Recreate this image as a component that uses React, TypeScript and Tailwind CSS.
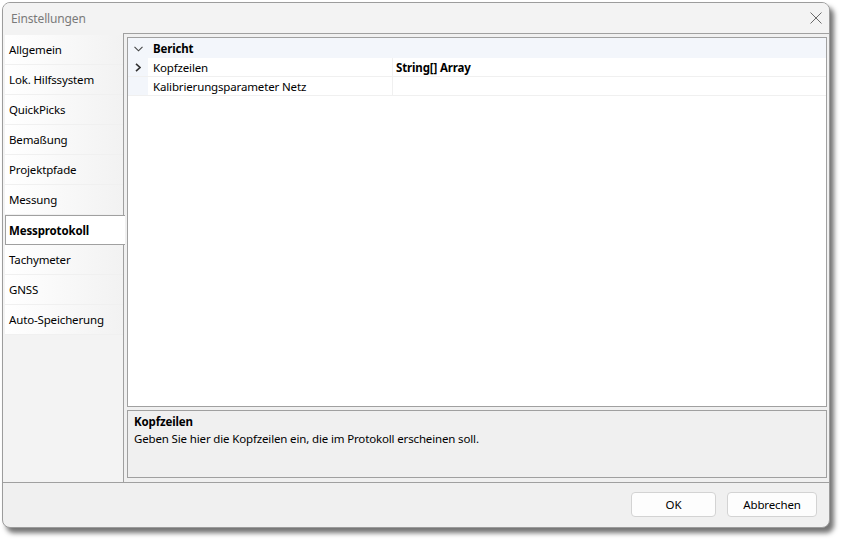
import { useState } from 'react';

const TABS = [
  'Allgemein',
  'Lok. Hilfssystem',
  'QuickPicks',
  'Bemaßung',
  'Projektpfade',
  'Messung',
  'Messprotokoll',
  'Tachymeter',
  'GNSS',
  'Auto-Speicherung',
];

const FONT = { fontFamily: '"Noto Sans", "Open Sans", sans-serif' };

export default function App() {
  const [active, setActive] = useState('Messprotokoll');

  return (
    <div
      className="w-[845px] h-[544px] bg-white pt-[2px] pl-[2px] text-[11.5px] tracking-[-0.15px] text-black"
      style={FONT}
    >
      <div className="w-[828px] h-[526px] flex flex-col border border-[#9c9c9c] rounded-[8px] bg-[#f0f0f0] shadow-[4px_5px_5px_rgba(0,0,0,0.55)] overflow-hidden">
        {/* Title bar */}
        <div className="h-[30px] shrink-0 flex items-center justify-between bg-[#f3f3f3] pl-[8px] pr-[7px] pt-[2px]">
          <span className="text-[#7a7a7a] leading-none text-[12px]">Einstellungen</span>
          <svg width="12" height="12" viewBox="0 0 12 12" className="mt-[-3px]">
            <path d="M0.5 0.5 L11.5 11.5 M11.5 0.5 L0.5 11.5" stroke="#6a6a6a" strokeWidth="1" fill="none" />
          </svg>
        </div>

        {/* Body */}
        <div className="flex h-[450px] shrink-0 border-b border-[#a0a0a0]">
          {/* Tab list */}
          <div className="w-[120px] shrink-0 flex flex-col pt-[2px] pl-[2px] bg-[#f3f3f3]">
            {TABS.map(t =>
              t === active ? (
                <div
                  key={t}
                  className="h-[30px] w-[120px] z-10 flex items-center pl-[3px] pt-[1px] bg-white border border-r-0 border-[#a0a0a0] font-bold"
                >
                  {t}
                </div>
              ) : (
                <div
                  key={t}
                  onClick={() => setActive(t)}
                  className="h-[30px] w-[118px] flex items-center pl-[4px] pt-[1px] mr-[1px] border-b border-[#f0f0f0] bg-gradient-to-r from-white to-[#f2f2f2] cursor-default"
                >
                  {t}
                </div>
              )
            )}
          </div>

          {/* Tab page */}
          <div className="flex-1 flex flex-col border-l border-t border-[#a0a0a0] bg-[#f0f0f0] pt-[3px] pl-[3px] pr-[2px] pb-[4px] gap-[3px]">
            {/* Property grid */}
            <div className="h-[370px] bg-white border border-[#a0a0a0] flex flex-col">
              <div className="h-[20px] flex items-center bg-[#f3f6fb] pt-[1px]">
                <div className="w-[20px] flex justify-center">
                  <svg width="9" height="6" viewBox="0 0 9 6">
                    <path d="M0.5 0.8 L4.5 4.8 L8.5 0.8" stroke="#444" strokeWidth="1.1" fill="none" />
                  </svg>
                </div>
                <span className="font-bold pl-[5px]">Bericht</span>
              </div>
              <div className="h-[19px] flex border-b border-[#f0f0f0]">
                <div className="w-[20px] flex items-center justify-center bg-[#f3f6fb]">
                  <svg width="6" height="9" viewBox="0 0 6 9">
                    <path d="M1 0.8 L5 4.5 L1 8.2" stroke="#333" strokeWidth="1.6" fill="none" />
                  </svg>
                </div>
                <div className="w-[245px] flex items-center pl-[5px] pt-[1px] border-r border-[#f0f0f0]">Kopfzeilen</div>
                <div className="flex-1 flex items-center pl-[3px] pt-[1px] font-bold">String[] Array</div>
              </div>
              <div className="h-[19px] flex border-b border-[#f0f0f0]">
                <div className="w-[20px] bg-[#f3f6fb]" />
                <div className="w-[245px] flex items-center pl-[5px] pt-[1px] border-r border-[#f0f0f0]">
                  Kalibrierungsparameter Netz
                </div>
                <div className="flex-1" />
              </div>
            </div>

            {/* Description */}
            <div className="flex-1 border border-[#a0a0a0] bg-[#f0f0f0] px-[6px] pt-[2px] leading-[17px]">
              <div className="font-bold">Kopfzeilen</div>
              <div>Geben Sie hier die Kopfzeilen ein, die im Protokoll erscheinen soll.</div>
            </div>
          </div>
        </div>

        {/* Footer */}
        <div className="flex-1 flex justify-end items-start gap-[11px] pt-[9px] pr-[12px]">
          <button className="w-[85px] h-[25px] bg-[#fdfdfd] border border-[#d3d3d3] rounded-[4px]">OK</button>
          <button className="w-[90px] h-[25px] bg-[#fdfdfd] border border-[#d3d3d3] rounded-[4px]">Abbrechen</button>
        </div>
      </div>
    </div>
  );
}
